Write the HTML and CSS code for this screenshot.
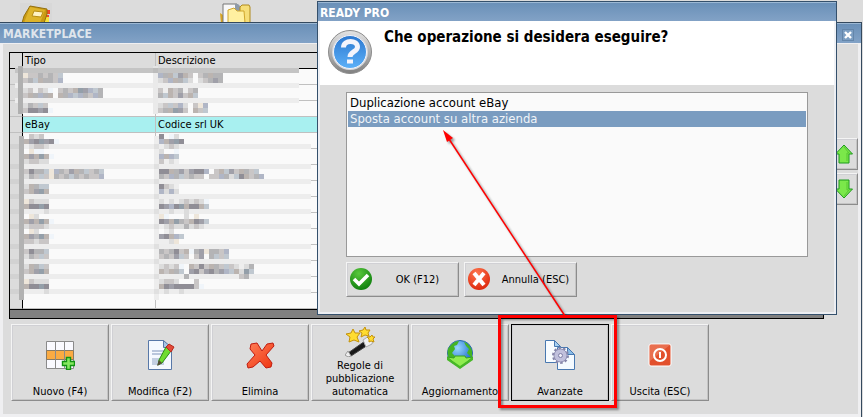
FILE: index.html
```html
<!DOCTYPE html>
<html lang="it">
<head>
  <meta charset="UTF-8">
  <title>Marketplace</title>
  <link rel="stylesheet" href="styles.css">
</head>
<body>
  <div class="desktop">
    <svg class="desk-icon" width="32" height="20" viewBox="0 0 32 20">
      <rect width="32" height="20" fill="#d8d8d8"/>
      <path d="M25 7h5v4h-3zM25 12h4v8h-5z" fill="#f04a2c"/>
      <path d="M25 14h4v6h-5z" fill="#f7e23c"/>
      <path d="M10 3l17 3v5l-3 9H2l2-7z" fill="#c99a14" stroke="#94700c"/>
      <path d="M10 4l15 3-5 13H4z" fill="#deb42a"/>
      <path d="M14 8l9 1-2 5-9-1z" fill="#fff3c4" stroke="#b78d14"/>
    </svg>
    <svg class="desk-icon" width="32" height="20" viewBox="0 0 32 20">
      <path d="M0 10l3 2v8H1z" fill="#d9a520"/>
      <path d="M3 1h14l5 5v14H3z" fill="#f8f8f8" stroke="#777"/>
      <path d="M15 1h3l5 5v4l-8-3z" fill="#8e9aa8"/>
      <path d="M20 20V4l2-2h7l1 2v16z" fill="#f6de78" stroke="#b08a1c"/>
      <path d="M8 20V7l6-2 3 3h7l1 12z" fill="#fff0a0" stroke="#d0a62c"/>
    </svg>
  </div>

  <main class="window">
    <header class="titlebar">
      <h1>MARKETPLACE</h1>
      <button class="close" aria-label="Chiudi">
        <svg width="8" height="8" viewBox="0 0 8 8"><path d="M1 1l6 6M7 1l-6 6" stroke="#fff" stroke-width="2.4"/></svg>
      </button>
    </header>

    <div class="window-body">
      <div class="content">
        <div class="grid-box">
          <table class="grid">
            <thead>
              <tr><th class="gutter"></th><th class="tipo">Tipo</th><th>Descrizione</th></tr>
            </thead>
            <tbody>
              <tr><td></td><td></td><td></td></tr>
              <tr><td></td><td></td><td></td></tr>
              <tr><td></td><td></td><td></td></tr>
              <tr class="current"><td></td><td>eBay</td><td>Codice srl UK</td></tr>
              <tr><td></td><td></td><td></td></tr>
              <tr><td></td><td></td><td></td></tr>
              <tr><td></td><td></td><td></td></tr>
              <tr><td></td><td></td><td></td></tr>
              <tr><td></td><td></td><td></td></tr>
              <tr><td></td><td></td><td></td></tr>
              <tr><td></td><td></td><td></td></tr>
              <tr><td></td><td></td><td></td></tr>
              <tr><td></td><td></td><td></td></tr>
              <tr><td></td><td></td><td></td></tr>
              <tr><td></td><td></td><td></td></tr>
            </tbody>
          </table>
          <svg class="mosaic" id="mosaic" width="306" height="256" viewBox="9 52 306 256" shape-rendering="crispEdges"></svg>
        </div>
        <div class="side">
          <button class="btn" aria-label="Sposta su">
            <svg width="20" height="20" viewBox="0 0 20 20"><path d="M10 1l8.500 9H15v9H5v-9H1.500z" fill="#7be84a" stroke="#1d9a1d"/><path d="M10 3l5 6h-2v8" fill="none" stroke="#58c832"/></svg>
          </button>
          <button class="btn" aria-label="Sposta giù">
            <svg width="20" height="20" viewBox="0 0 20 20"><path d="M10 19l8.500-9H15V1H5v9H1.500z" fill="#7be84a" stroke="#1d9a1d"/><path d="M10 17l5-6h-2V3" fill="none" stroke="#58c832"/></svg>
          </button>
        </div>
      </div>

      <nav class="toolbar">
        <button class="btn tool">
          <span class="icon"><svg width="30" height="30" viewBox="0 0 30 30">
            <path d="M1.500 1.500h27v27h-27z" fill="#fafaff" stroke="#8a8a8a"/>
            <path d="M1.500 10.500h27v9h-27z" fill="#fbab42" stroke="#8a7a60"/>
            <path d="M10.500 1v28M19.500 1v28" stroke="#8a8a8a"/>
            <path d="M21.500 17.500h4v4h4v4h-4v4h-4v-4h-4v-4h4z" fill="#86e860" stroke="#119311" stroke-width="1.400"/>
          </svg></span>
          <span>Nuovo (F4)</span>
        </button>
        <button class="btn tool">
          <span class="icon"><svg width="30" height="30" viewBox="0 0 30 30">
            <path d="M3.500.5h15l8 8v21h-23z" fill="#f5f9ff" stroke="#5878a8"/>
            <path d="M18.500.5v7h8z" fill="#a8c4e4" stroke="#5878a8"/>
            <path d="M7 11h14M7 14h12" stroke="#b9c6dc" stroke-width="2"/>
            <path d="M7 18h12v7H7z" fill="#c3cfe2"/>
            <path d="M21 7l5 4-9 12-4 2 1-5z" fill="#6fdc30" stroke="#2c8a18"/>
            <path d="M14 20l3 3-5 3z" fill="#5a4a3a"/>
            <path d="M21 7l3-3 5 3-3 5z" fill="#e24a38" stroke="#b8281c"/>
          </svg></span>
          <span>Modifica (F2)</span>
        </button>
        <button class="btn tool">
          <span class="icon"><svg width="30" height="30" viewBox="0 0 30 30">
            <defs><linearGradient id="redx" x1="0" y1="0" x2="1" y2="1"><stop offset="0" stop-color="#ff8058"/><stop offset="1" stop-color="#ee3410"/></linearGradient></defs>
            <path d="M6 4l6-1 5 8 5-7 6-1 1 3-8 9 6 8-1 4-5 1-6-7-7 6-5 1-1-4 8-9-5-6z" fill="url(#redx)" stroke="#c01c10" stroke-linejoin="round"/>
          </svg></span>
          <span>Elimina</span>
        </button>
        <button class="btn tool">
          <span class="icon"><svg width="30" height="30" viewBox="0 0 30 30">
            <path d="M3 26L23 12l3 4L6 29z" fill="#181818" stroke="#444"/>
            <path d="M3 24l3 5-3 1-3-2z" fill="#eee" stroke="#999"/>
            <path d="M18 13l6-4 4 4-1 4-6 3z" fill="#f0f0f0" stroke="#aaa"/>
            <path d="M8 2l2 4 5 0-3 4 2 5-5-2-5 2 1-5-4-3 5-1z" fill="#ffdc30" stroke="#c4920c"/>
            <path d="M20 0l1 3 4 0-2 3 1 3-4-1-4 2 1-4-3-2 4-1z" fill="#ffdc30" stroke="#c4920c"/>
            <path d="M27 8l1 2h2l-2 2 1 3-3-1-2 1 0-3-2-2h3z" fill="#ffdc30" stroke="#c4920c"/>
          </svg></span>
          <span>Regole di pubblicazione automatica</span>
        </button>
        <button class="btn tool">
          <span class="icon"><svg width="30" height="30" viewBox="0 0 30 30">
            <defs><radialGradient id="globe" cx=".4" cy=".3" r=".7"><stop offset="0" stop-color="#9ad8ff"/><stop offset="1" stop-color="#1464c8"/></radialGradient></defs>
            <circle cx="15" cy="13" r="12.500" fill="url(#globe)" stroke="#2a68a8"/>
            <path d="M3 9c3-5 7-8 11-8l-2 4-3 1 1 3-3 4 3 3-3 5c-4-3-5-8-4-12zM19 2c4 1 7 5 8 9v7l-5-5 2-4-3-3z" fill="#44b424"/>
            <path d="M2 17l7 1 1-2h10l1 2 7-1-13 11z" fill="#90ec50" stroke="#38a020"/>
            <path d="M2 17v3l13 9 13-9v-3l-13 9z" fill="#48b828"/>
          </svg></span>
          <span>Aggiornamento</span>
        </button>
        <button class="btn tool focused">
          <span class="icon"><svg width="30" height="30" viewBox="0 0 30 30">
            <path d="M.5.5h9l6 6v16H.500z" fill="#f8fcff" stroke="#4878b0"/>
            <path d="M9.500.5v6h6z" fill="#a8d0f0" stroke="#4878b0"/>
            <path d="M12.500 7.500h10l7 7v15h-17z" fill="#f4faff" stroke="#4878b0"/>
            <path d="M22.500 7.500v7h7z" fill="#88bce8" stroke="#4878b0"/>
            <circle cx="15.500" cy="15.500" r="7" fill="none" stroke="#8484a8" stroke-width="3" stroke-dasharray="2.400 2"/>
            <circle cx="15.500" cy="15.500" r="6.500" fill="#c0c0dc" stroke="#9090b4"/>
            <circle cx="15.500" cy="15.500" r="2" fill="#f0f0fa" stroke="#8080a8"/>
          </svg></span>
          <span>Avanzate</span>
        </button>
        <button class="btn tool">
          <span class="icon"><svg width="24" height="24" viewBox="0 0 24 24">
            <rect x="1" y="1" width="22" height="22" rx="2" fill="#e2502c" stroke="#fff"/>
            <path d="M2 2h20L2 18z" fill="#ee8468" opacity=".6"/>
            <circle cx="12" cy="12" r="6" fill="none" stroke="#fff" stroke-width="2"/>
            <path d="M12 9v6" stroke="#fff" stroke-width="2"/>
          </svg></span>
          <span>Uscita (ESC)</span>
        </button>
      </nav>
    </div>
  </main>

  <section class="dialog" role="dialog" aria-labelledby="question">
    <header class="dialog-title">READY PRO</header>
    <div class="dialog-head">
      <svg width="46" height="46" viewBox="0 0 46 46">
        <defs>
          <linearGradient id="ring" x1="0" y1="0" x2="0" y2="1"><stop offset="0" stop-color="#e4e4e4"/><stop offset="1" stop-color="#808080"/></linearGradient>
          <linearGradient id="blue" x1="0" y1="0" x2="0" y2="1"><stop offset="0" stop-color="#2c78d0"/><stop offset="1" stop-color="#5cb0f8"/></linearGradient>
        </defs>
        <circle cx="23" cy="23" r="21.500" fill="url(#ring)" stroke="#8c8c8c"/>
        <circle cx="23" cy="23" r="18" fill="#d8d8dc"/>
        <circle cx="23" cy="23" r="16.500" fill="url(#blue)" stroke="#f4f4f8"/>
        <path d="M16.500 18.500c0-8 14-8 14-.5 0 5-7.500 4.500-7.500 10" fill="none" stroke="#f4f4fc" stroke-width="5"/>
        <path d="M20 30.500h6v4h-6z" fill="#f4f4fc"/>
      </svg>
      <h2 id="question">Che operazione si desidera eseguire?</h2>
    </div>
    <div class="dialog-body">
      <select class="choices" size="10" aria-labelledby="question">
        <option>Duplicazione account eBay</option>
        <option selected>Sposta account su altra azienda</option>
      </select>
      <div class="dialog-buttons">
        <button class="btn">
          <svg width="24" height="24" viewBox="0 0 24 24">
            <defs><radialGradient id="ok" cx=".4" cy=".25" r=".8"><stop offset="0" stop-color="#58c83c"/><stop offset="1" stop-color="#0c7c0c"/></radialGradient></defs>
            <circle cx="12" cy="11" r="11" fill="url(#ok)"/>
            <path d="M5 11l5 5 9-9" fill="none" stroke="#fff" stroke-width="3.600"/>
          </svg>
          <span>OK (F12)</span>
        </button>
        <button class="btn">
          <svg width="24" height="24" viewBox="0 0 24 24">
            <defs><radialGradient id="ko" cx=".4" cy=".25" r=".8"><stop offset="0" stop-color="#ff7850"/><stop offset="1" stop-color="#dc2408"/></radialGradient></defs>
            <circle cx="12" cy="11" r="11" fill="url(#ko)"/>
            <path d="M7 5l10 12M17 5L7 17" stroke="#fff" stroke-width="4"/>
          </svg>
          <span>Annulla (ESC)</span>
        </button>
      </div>
    </div>
  </section>

  <svg class="callout" width="863" height="417" viewBox="0 0 863 417">
    <rect x="499.500" y="316.500" width="116" height="90" fill="none" stroke="#ff0000" stroke-width="3"/>
    <path d="M565 316L449 139" stroke="#ff0000" stroke-width="1.500"/>
    <path d="M443 130l10 8-6 4z" fill="#ff0000"/>
  </svg>

  <script>
    // colours of the blocks that hide the private rows
    const shades = {
      k: "#908e96", d: "#a0a0a9", m: "#b4b4b6", g: "#c9c6c6", l: "#dcdcdc", w: "#eeeeee",
      b: "#b0b6c6", c: "#c0c8d0", y: "#eee6da", t: "#bbb4b0", n: "#949fa9", s: "#f0f5fa"
    };

    const bars = [
      [15, 68, 284, 5, "#c4c4c4"], [15, 83, 284, 5, "#ededed"], [15, 98, 284, 5, "#ededed"],
      [18, 66, 5, 48, "#b0b0b0"], [153, 66, 5, 48, "#e4e4e4"], [153, 68, 5, 5, "#bcbcbc"],
      [23, 73, 276, 10, "#fafafa"], [23, 88, 276, 10, "#fafafa"],
      [24, 136, 287, 158, "#fafafa"], [154, 136, 5, 164, "#ededed"]
    ];
    for (const y of [144, 164, 179, 194, 209, 224, 244, 259, 274, 289]) {
      bars.push([10, y, 9, 5, "#d2d2d2"], [24, y, 287, 5, "#ededed"], [154, y, 5, 5, "#e0e0e0"]);
    }
    bars.push([19, 136, 5, 164, "#b2b2b2"], [153, 73, 5, 41, "#eaeaea"]);

    // x, y, one letter for each 5px block
    const blocks = [
      [23, 73, "yggmgmgc"], [23, 78, "gmctmmgb"],
      [158, 73, "bmtcdtg.gmtmm"], [158, 78, "lgbtmcl.lgmdm"],
      [23, 88, "lgwgls.gmgtndbcm"], [23, 93, "gtmbmt.tmbcbmgbm"],
      [158, 88, "gwtgmwgm"], [158, 93, "mctgdgtc"],
      [23, 103, "lmgcg"], [23, 108, "gkkdks"],
      [158, 103, "lgcgbl.gyb"], [158, 108, "gmtndg.tgc"],
      [24, 134, ".glg"], [24, 139, "tdkndks"], [24, 144, "wlggl"],
      [159, 134, "k.sl"], [159, 139, "btdnk"], [159, 144, "wlgl"],
      [24, 149, ".yss"], [24, 154, "tdtnts"], [24, 159, "lggll"],
      [159, 149, "l..s"], [159, 154, "btbc"], [159, 159, "gwlw"],
      [24, 169, "gkmmcybmgdtmcgmc"], [24, 174, "lmgcgymgmcmgmggb"],
      [159, 169, "kktmdgdkkb.gtcdgtmgc"], [159, 174, "mgbmcgmgg.ggbmlcktgmb"],
      [24, 184, "ltmcc"], [24, 189, "gtdnt"],
      [159, 184, "kglw"], [159, 189, "blbl"],
      [24, 199, "yglll"], [24, 204, "tkknk"], [44, 209, "l"],
      [159, 199, "lwlwlglgls"], [159, 204, "kdbkntkktc"], [169, 209, "l..l"],
      [24, 214, ".yl"], [24, 219, "tdtnts"], [24, 224, "lgggl"],
      [159, 214, "ys...l.y"], [159, 219, "kdtnmgtkdc"], [159, 224, "wlgllmlgl"],
      [24, 229, ".yl"], [24, 234, "tdmnts"], [24, 239, "gglgg"],
      [159, 229, ".wl"], [159, 234, "dktbc"], [159, 239, "wwly"],
      [24, 249, "gkmmc"], [24, 254, "lmgcg"],
      [159, 249, "mgmkgtsmdymmgb"], [159, 254, "gmgdcg.gd.mcgc"],
      [24, 264, "ltmcg"], [24, 269, "gtdnt"],
      [159, 264, "lglgs.tgkgtmgcglwlm"], [159, 269, "tgtmc.dkgdkmdbctlnc"], [184, 274, "m"], [239, 274, "gm"],
      [24, 279, "yglll"], [24, 284, "tkknk"], [44, 289, "l"],
      [159, 279, "lggl...g"], [159, 284, "tkdkkkkgs"], [164, 289, "l..l"]
    ];

    let out = "";
    const rect = (x, y, w, h, fill) => {
      out += `<rect x="${x}" y="${y}" width="${w}" height="${h}" fill="${fill}"/>`;
    };
    bars.forEach(b => rect(...b));
    for (const [x, y, row] of blocks) {
      [...row].forEach((c, i) => { if (shades[c]) rect(x + i * 5, y, 5, 5, shades[c]); });
    }
    document.getElementById("mosaic").innerHTML = out;
  </script>
</body>
</html>
```

FILE: styles.css
```css
* {
  box-sizing: border-box;
}

body {
  margin: 0;
  background: #dcdcdc;
  color: #000;
  font-family: "DejaVu Sans Condensed", Tahoma, "DejaVu Sans", sans-serif;
  font-size: 11px;
  line-height: 13px;
}

button, select {
  font: inherit;
  color: inherit;
}

svg {
  display: block;
  flex: none;
}

.desktop {
  display: flex;
  gap: 168px;
  height: 22px;
  padding: 3px 0 0 20px;
  overflow: hidden;
}

/* main window */
.window {
  margin-right: 1px;
  border-top: 1px solid #34495e;
  border-right: 1px solid #34495e;
}

.titlebar {
  display: flex;
  align-items: center;
  justify-content: space-between;
  height: 20px;
  padding: 2px 7px 0 3px;
  border-top: 1px solid #9cb8d4;
  background: linear-gradient(#6a90b8, #82a2c6);
}

.titlebar h1 {
  margin: 0;
  font-size: 12px;
  color: #dfe5ec;
}

.close {
  display: flex;
  align-items: center;
  justify-content: center;
  width: 12px;
  height: 12px;
  padding: 0;
  border: 1px solid #6486aa;
  background: #7d9fc3;
}

.window-body {
  padding: 8px 0 13px 6px;
  border: 3px solid #efeff1;
  border-top-width: 1px;
}

.content {
  display: flex;
  gap: 5px;
}

.grid-box {
  position: relative;
  flex: 1;
  padding-bottom: 8px;
  border: 1px solid #000;
  background: #808080;
}

.grid {
  width: 100%;
  table-layout: fixed;
  border-collapse: separate;
  border-spacing: 0;
  border-bottom: 1px solid #000;
  background: #fafafa;
}

.grid th, .grid td {
  height: 16px;
  padding: 0 2px;
  border-right: 1px solid #c0c0c0;
  border-bottom: 1px solid #c0c0c0;
  font-weight: normal;
  text-align: left;
}

.grid th {
  border-bottom-color: #000;
  background: #dcdcdc;
}

.grid .gutter {
  width: 13px;
}

.grid .tipo {
  width: 133px;
}

.grid th:first-child, .grid td:first-child {
  padding: 0;
  border-right-color: #000;
  background: #dcdcdc;
}

.grid .current td:not(:first-child) {
  background: #a8f0f0;
}

.mosaic {
  position: absolute;
  top: -1px;
  left: -1px;
}

.btn {
  border: 1px solid #f4f4f4;
  border-right-color: #8c8c8c;
  border-bottom-color: #8c8c8c;
  background: #dcdcdc;
  box-shadow: inset 1px 1px #d0d0d4, inset -1px -1px #c4c4c4;
}

.side {
  display: flex;
  flex-direction: column;
  gap: 3px;
  width: 29px;
  padding-top: 86px;
}

.side .btn {
  display: flex;
  align-items: center;
  justify-content: center;
  height: 32px;
  padding: 0;
}

.toolbar {
  display: flex;
  gap: 2px;
  margin: 5px 0 0 2px;
}

.tool {
  display: flex;
  flex-direction: column;
  align-items: center;
  width: 98px;
  height: 77px;
  padding: 0 4px 2px;
}

.tool .icon {
  display: flex;
  flex: 1;
  align-items: center;
}

.tool.focused {
  border-color: #000;
}

/* dialog */
.dialog {
  position: absolute;
  top: 1px;
  left: 317px;
  width: 520px;
  border: 1px solid #34506c;
  background: #dcdcdc;
}

.dialog-title {
  height: 19px;
  padding: 4px 2px 0;
  border-top: 1px solid #9cb8d4;
  background: linear-gradient(#6a90b8, #82a2c6);
  color: #fff;
  font-size: 12px;
  font-weight: bold;
}

.dialog-head {
  display: flex;
  gap: 11px;
  height: 64px;
  padding: 8px 7px 0;
  border: solid #f0f2f6;
  border-width: 0 2px;
  background: #fff;
}

.dialog-head h2 {
  margin: 0;
  font-size: 15px;
  line-height: 16px;
}

.dialog-body {
  padding: 7px 26px 15px;
  border: 2px solid #eceef2;
  border-top: 0;
}

.choices {
  display: block;
  width: 100%;
  height: 165px;
  padding: 2px 1px;
  border: 1px solid #999;
  border-radius: 0;
  outline: 0;
  background: #fafafa;
  font-size: 13px;
  overflow: hidden;
}

.choices option {
  min-height: 16px;
  padding: 0 2px;
  line-height: 16px;
}

.choices option:checked {
  background: #7a9cc0 !important;
  color: #f0f4f8 !important;
}

.dialog-buttons {
  display: flex;
  gap: 5px;
  margin-top: 5px;
}

.dialog-buttons .btn {
  display: flex;
  align-items: center;
  gap: 6px;
  width: 113px;
  height: 35px;
  padding: 0 2px;
}

.dialog-buttons span {
  flex: 1;
  text-align: center;
}

.callout {
  position: absolute;
  top: 0;
  left: 0;
  pointer-events: none;
  filter: drop-shadow(2px 2px 1px rgba(0, 0, 0, 0.4));
}
```
